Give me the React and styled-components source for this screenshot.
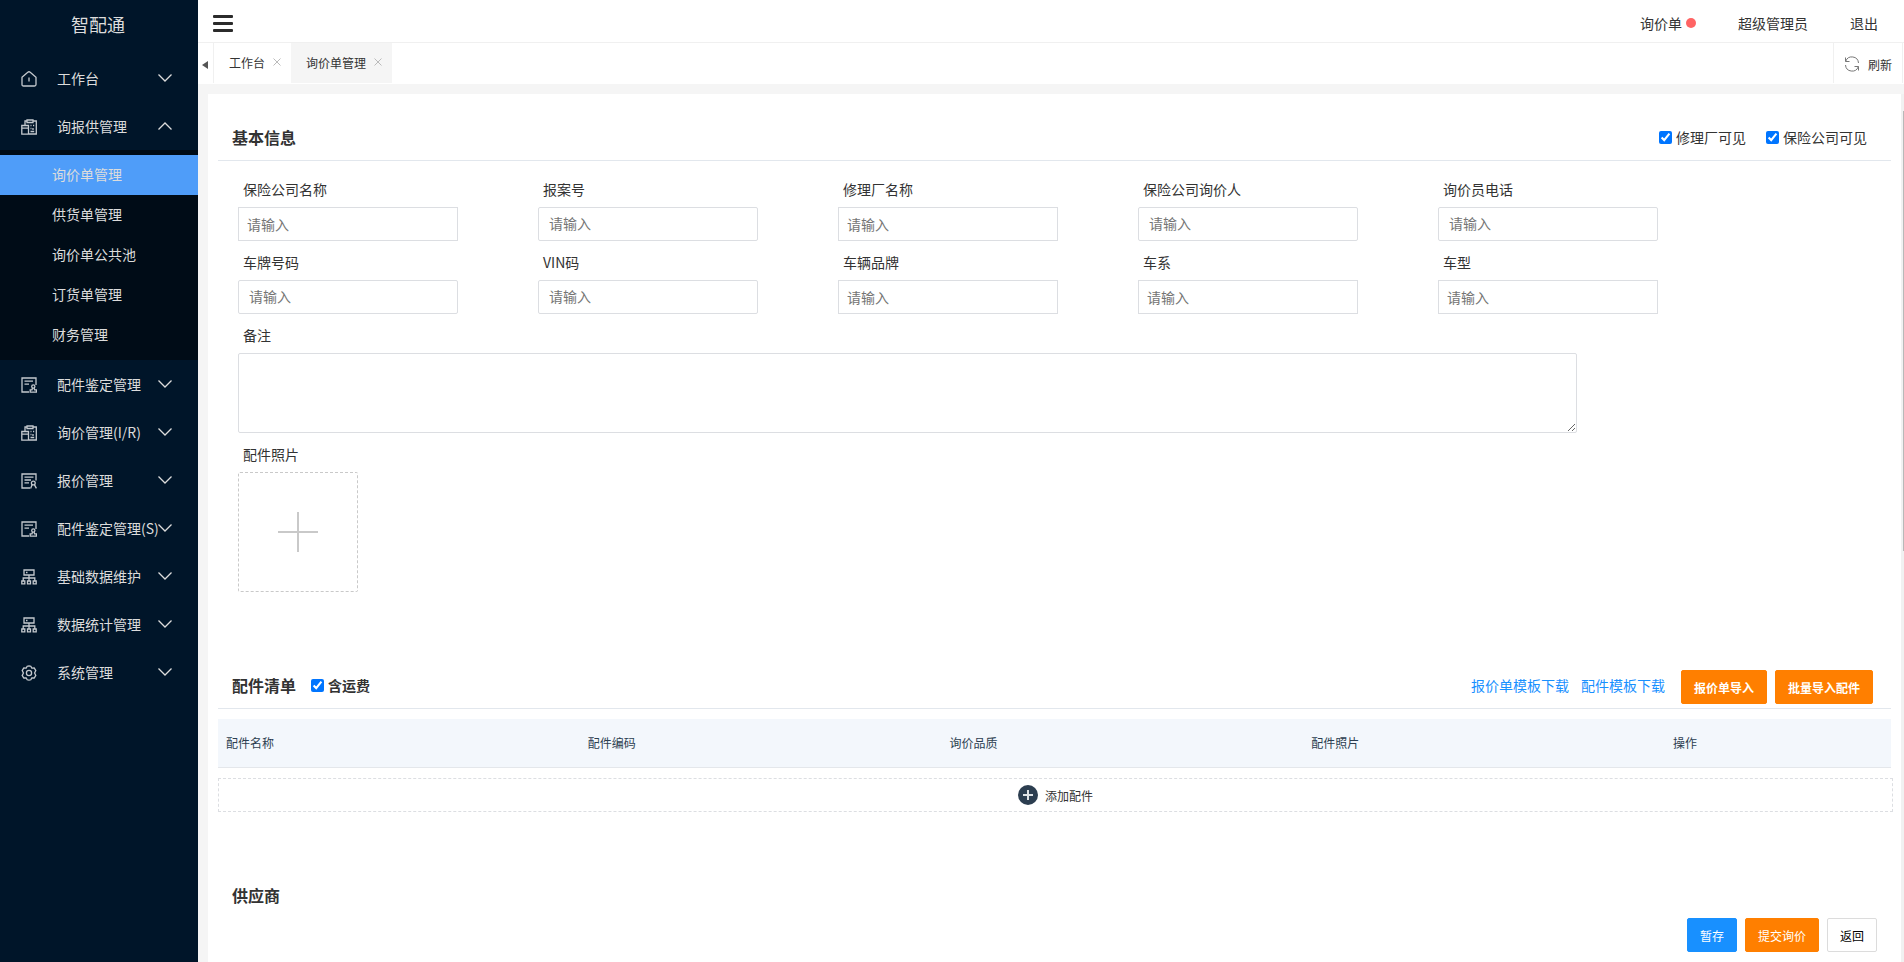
import React, { useState } from "react";
import styled, { createGlobalStyle } from "styled-components";

const menus = [
	{ name: "工作台", icon: "home" },
	{
		name: "询报供管理",
		icon: "clipboard",
		children: ["询价单管理", "供货单管理", "询价单公共池", "订货单管理", "财务管理"],
	},
	{ name: "配件鉴定管理", icon: "stamp" },
	{ name: "询价管理(I/R)", icon: "clipboard" },
	{ name: "报价管理", icon: "quote" },
	{ name: "配件鉴定管理(S)", icon: "stamp" },
	{ name: "基础数据维护", icon: "tree" },
	{ name: "数据统计管理", icon: "tree" },
	{ name: "系统管理", icon: "gear" },
];

const fields = [
	{ id: "insurer", label: "保险公司名称", select: true },
	{ id: "caseNo", label: "报案号" },
	{ id: "garage", label: "修理厂名称", select: true },
	{ id: "inquirer", label: "保险公司询价人" },
	{ id: "phone", label: "询价员电话" },
	{ id: "plate", label: "车牌号码" },
	{ id: "vin", label: "VIN码" },
	{ id: "brand", label: "车辆品牌", select: true },
	{ id: "series", label: "车系", select: true },
	{ id: "model", label: "车型", select: true },
];

const columns = ["配件名称", "配件编码", "询价品质", "配件照片", "操作"];

const icons = {
	home: (
		<>
			<path d="M1 6.2 L6.8 1.2 Q8 .3 9.2 1.2 L15 6.2 V13.5 Q15 15 13.5 15 H2.5 Q1 15 1 13.5 Z" />
			<path d="M8 6.5 V10.5" />
		</>
	),
	clipboard: (
		<>
			<path d="M4 5 V2 H6 M12 2 H15.3 V15 H8" />
			<path d="M6 1 H12 V3.5 H6 Z" />
			<path d="M.8 6.5 H7.5 V15.2 H.8 Z M.8 9.2 H7.5 M4 5 V6.5" />
			<path d="M9.5 6.5 H10.5 M12 6.5 H13.2 M9.5 9.5 H10.5 M12 9 V11 M9.5 12.5 H13.2" />
		</>
	),
	stamp: (
		<>
			<path d="M15 8 V1 H1 V15 H8" />
			<path d="M3.5 4.2 H12 M3.5 7.2 H8" />
			<circle cx="12.3" cy="9.5" r="1.6" />
			<path d="M11.5 11 L11 12.8 H9.2 V15.2 H15.4 V12.8 H13.6 L13 11" />
		</>
	),
	quote: (
		<>
			<path d="M15 7.5 V1 H1 V15 H9" />
			<path d="M3.5 4.2 H12.5 M3.5 7 H10 M3.5 9.8 H8" />
			<circle cx="12.3" cy="10" r="1.9" />
			<path d="M11.2 11.6 L9.6 15.4 M13.4 11.6 L15.4 15.4" />
		</>
	),
	tree: (
		<>
			<path d="M3 1 H13 V6 H3 Z M5 3.5 H6.5" />
			<path d="M8 6 V12 M2.2 12 V9 H13.8 V12" />
			<path d="M.8 12 H3.8 V14.8 H.8 Z M6.5 12 H9.5 V14.8 H6.5 Z M12.2 12 H15.2 V14.8 H12.2 Z" />
		</>
	),
	gear: (
		<>
			<path d="M8 .8 L9.8 1.2 L10.8 3.1 L13.2 3 L14.8 5.6 L13.6 8 L14.8 10.4 L13.2 13 L10.8 12.9 L9.8 14.8 L8 15.2 L6.2 14.8 L5.2 12.9 L2.8 13 L1.2 10.4 L2.4 8 L1.2 5.6 L2.8 3 L5.2 3.1 L6.2 1.2 Z" />
			<circle cx="8" cy="8" r="2.6" />
		</>
	),
};

const Chevron = ({ up }) => (
	<ChevronSvg viewBox="0 0 14 8" aria-hidden="true">
		<path d={up ? "M.5 7.5 L7 1 L13.5 7.5" : "M.5 .5 L7 7 L13.5 .5"} />
	</ChevronSvg>
);

const Cross = () => (
	<CrossSvg viewBox="0 0 8 8" aria-hidden="true">
		<path d="M.5 .5 L7.5 7.5 M7.5 .5 L.5 7.5" />
	</CrossSvg>
);

const Check = ({ id, label, strong }) => (
	<CheckLabel htmlFor={id} $strong={strong}>
		<input type="checkbox" id={id} defaultChecked />
		{label}
	</CheckLabel>
);

const Sidebar = ({ open, active, onToggle, onSelect }) => (
	<StyledSidebar>
		<Logo>智配通</Logo>
		{menus.map(menu => (
			<React.Fragment key={menu.name}>
				<MenuItem type="button" onClick={() => onToggle(menu.name)}>
					<MenuIcon viewBox="0 0 16 16" aria-hidden="true">
						{icons[menu.icon]}
					</MenuIcon>
					<span>{menu.name}</span>
					<Chevron up={open === menu.name} />
				</MenuItem>
				{menu.children && open === menu.name && (
					<SubMenu>
						{menu.children.map(child => (
							<SubItem href="#" key={child} $active={active === child} onClick={() => onSelect(child)}>
								{child}
							</SubItem>
						))}
					</SubMenu>
				)}
			</React.Fragment>
		))}
	</StyledSidebar>
);

const App = () => {
	const [open, setOpen] = useState("询报供管理");
	const [active, setActive] = useState("询价单管理");

	return (
		<Shell>
			<GlobalStyle />
			<Sidebar
				open={open}
				active={active}
				onToggle={name => setOpen(open === name ? "" : name)}
				onSelect={setActive}
			/>
			<Main>
				<Header>
					<Hamburger type="button" aria-label="menu">
						<i />
						<i />
						<i />
					</Hamburger>
					<UserNav>
						<a href="#">
							询价单
							<Dot />
						</a>
						<a href="#">超级管理员</a>
						<a href="#">退出</a>
					</UserNav>
				</Header>

				<TabBar>
					<TabArrow type="button" aria-label="prev">
						<svg width="6" height="8" viewBox="0 0 6 8">
							<path d="M6 0 V8 L0 4 Z" fill="#555" />
						</svg>
					</TabArrow>
					<Tab type="button">
						工作台
						<Cross />
					</Tab>
					<Tab type="button" $active>
						询价单管理
						<Cross />
					</Tab>
					<Refresh type="button">
						<svg width="16" height="16" viewBox="0 0 16 16" fill="none" stroke="#777">
							<path d="M1.5 1.5 V5.5 H5.5 M1.7 5.3 A6.6 6.6 0 0 1 14.5 7" />
							<path d="M14.5 14.5 V10.5 H10.5 M14.3 10.7 A6.6 6.6 0 0 1 1.5 9" />
						</svg>
						刷新
					</Refresh>
				</TabBar>

				<Content>
					<Panel>
						<Section>
							<SectionHead $line>
								<h2>基本信息</h2>
								<HeadChecks>
									<Check id="garageVisible" label="修理厂可见" />
									<Check id="insurerVisible" label="保险公司可见" />
								</HeadChecks>
							</SectionHead>
							<Form>
								<FieldGrid>
									{fields.map(field => (
										<Field key={field.id}>
											<label htmlFor={field.id}>{field.label}</label>
											<Input type="text" id={field.id} placeholder="请输入" $select={field.select} />
										</Field>
									))}
								</FieldGrid>
								<Field>
									<label htmlFor="remark">备注</label>
									<TextArea id="remark" />
								</Field>
								<Field>
									<label htmlFor="photo">配件照片</label>
									<Upload type="button" id="photo">
										<svg width="40" height="40" viewBox="0 0 40 40" stroke="#c9c9c9" strokeWidth="2">
											<path d="M20 0 V40 M0 20 H40" />
										</svg>
									</Upload>
								</Field>
							</Form>
						</Section>

						<Section>
							<SectionHead $line>
								<h2>配件清单</h2>
								<Check id="freight" label="含运费" strong />
								<HeadTools>
									<a href="#">报价单模板下载</a>
									<a href="#">配件模板下载</a>
									<ButtonGroup>
										<Button type="button" $color="#ff7f00" $bold>
											报价单导入
										</Button>
										<Button type="button" $color="#ff7f00" $bold>
											批量导入配件
										</Button>
									</ButtonGroup>
								</HeadTools>
							</SectionHead>
							<Table>
								<thead>
									<tr>
										{columns.map(col => (
											<th key={col}>{col}</th>
										))}
									</tr>
								</thead>
							</Table>
							<AddRow type="button">
								<svg width="20" height="20" viewBox="0 0 20 20">
									<circle cx="10" cy="10" r="10" fill="#2c3e50" />
									<path d="M10 5 V15 M5 10 H15" stroke="#dfe3e6" strokeWidth="2" />
								</svg>
								添加配件
							</AddRow>
						</Section>

						<SectionHead>
							<h2>供应商</h2>
						</SectionHead>
						<Actions>
							<Button type="button" $color="#1890ff">
								暂存
							</Button>
							<Button type="button" $color="#ff7f00">
								提交询价
							</Button>
							<Button type="button">返回</Button>
						</Actions>
					</Panel>
					<ScrollTrack>
						<ScrollThumb />
					</ScrollTrack>
				</Content>
			</Main>
		</Shell>
	);
};

const GlobalStyle = createGlobalStyle`
	* {
		box-sizing: border-box;
	}
	body {
		margin: 0;
		color: #333;
		font-size: 14px;
	}
	body, button, input, textarea {
		font-family: "Noto Sans CJK SC", sans-serif;
	}
	button {
		padding: 0;
		border: none;
		background: none;
		color: inherit;
		cursor: pointer;
	}
	a {
		color: inherit;
		text-decoration: none;
	}
	svg {
		flex: none;
	}
`;

const Shell = styled.div`
	display: flex;
	min-height: 100vh;
`;

const StyledSidebar = styled.nav`
	flex: none;
	width: 198px;
	background: #001529;
	color: #dcdcdc;
`;

const Logo = styled.div`
	height: 54px;
	padding: 0 2px 6px 0;
	line-height: 48px;
	text-align: center;
	font-size: 18px;
`;

const MenuItem = styled.button`
	display: flex;
	align-items: center;
	width: 100%;
	height: 48px;
	padding: 0 26px 0 21px;
	font-size: 14px;
	text-align: left;

	span {
		flex: 1;
		min-width: 0;
		margin-left: 20px;
		white-space: nowrap;
	}
`;

const MenuIcon = styled.svg`
	width: 16px;
	height: 16px;
	margin-top: 2px;
	fill: none;
	stroke: #c4c9ce;
	stroke-width: 1.3;
`;

const ChevronSvg = styled.svg`
	width: 14px;
	height: 8px;
	fill: none;
	stroke: #dcdcdc;
	stroke-width: 1.3;
`;

const SubMenu = styled.div`
	padding: 5px 0;
	background: #000c17;
`;

const SubItem = styled.a`
	display: block;
	padding: 0 0 2px 52px;
	line-height: 38px;
	background: ${props => (props.$active ? "#4f9df9" : "none")};
`;

const Main = styled.div`
	display: flex;
	flex: 1;
	flex-direction: column;
	min-width: 0;
`;

const Header = styled.header`
	display: flex;
	align-items: center;
	justify-content: space-between;
	height: 43px;
	padding: 4px 26px 0 15px;
	border-bottom: 1px solid #f0f0f0;
`;

const Hamburger = styled.button`
	display: flex;
	flex-direction: column;
	gap: 4px;
	width: 20px;

	i {
		height: 3px;
		border-radius: 1px;
		background: #2b2b2b;
	}
`;

const UserNav = styled.div`
	display: flex;
	gap: 42px;

	a {
		display: flex;
		align-items: center;
	}
`;

const Dot = styled.span`
	width: 10px;
	height: 10px;
	margin-left: 4px;
	border-radius: 50%;
	background: #ff6464;
`;

const TabBar = styled.div`
	display: flex;
	height: 41px;
	padding-bottom: 1px;
	padding-right: 1px;
`;

const TabArrow = styled.button`
	width: 16px;
	padding-right: 2px;
	border-right: 1px solid #f0f0f0;
`;

const Tab = styled.button`
	display: flex;
	align-items: center;
	gap: 8px;
	padding: 0 10px 2px 15px;
	background: ${props => (props.$active ? "#f5f5f5" : "#fff")};
	font-size: 12px;
`;

const CrossSvg = styled.svg`
	width: 8px;
	height: 8px;
	stroke: #bbb;
`;

const Refresh = styled.button`
	display: flex;
	align-items: center;
	gap: 8px;
	margin-left: auto;
	padding: 2px 10px 0;
	border: solid #f0f0f0;
	border-width: 0 1px;
	font-size: 12px;
`;

const Content = styled.main`
	display: flex;
	flex: 1;
	padding: 10px 0 0 10px;
	background: #f5f5f5;
`;

const Panel = styled.div`
	flex: 1;
	min-width: 0;
	padding: 10px;
	background: #fff;
`;

const ScrollTrack = styled.div`
	width: 3px;
	padding: 17px 0 0 2px;
	background: #f1f1f1;
`;

const ScrollThumb = styled.div`
	height: 440px;
	background: #b8b8b8;
`;

const Section = styled.section`
	padding-bottom: 50px;
`;

const SectionHead = styled.div`
	display: flex;
	align-items: center;
	padding: 10px 18px 0 14px;
	height: ${props => (props.$line ? "57px" : "56px")};
	border-bottom: ${props => (props.$line ? "1px solid #e2e7ed" : "none")};

	h2 {
		margin: 0 15px 0 0;
		font-size: 16px;
		font-weight: 700;
	}
`;

const CheckLabel = styled.label`
	display: flex;
	align-items: center;
	gap: 4px;
	font-weight: ${props => (props.$strong ? 700 : 400)};

	input {
		width: 13px;
		height: 13px;
		margin: 0;
	}
`;

const HeadChecks = styled.div`
	display: flex;
	gap: 20px;
	margin-left: auto;
	padding-right: 6px;
`;

const HeadTools = styled.div`
	display: flex;
	align-items: center;
	gap: 12px;
	margin-left: auto;

	a {
		color: #1890ff;
	}
`;

const ButtonGroup = styled.div`
	display: flex;
	gap: 8px;
	padding: 4px 0 0 4px;
`;

const Button = styled.button`
	height: 34px;
	padding: 0 12px;
	border: 1px solid ${props => props.$color || "#dcdcdc"};
	border-radius: 2px;
	background: ${props => props.$color || "#fff"};
	color: ${props => (props.$color ? "#fff" : "#000")};
	font-size: 12px;
	font-weight: ${props => (props.$bold ? 700 : 400)};
`;

const Form = styled.form`
	display: flex;
	flex-direction: column;
	gap: 10px;
	padding: 17px 0 10px 20px;
`;

const FieldGrid = styled.div`
	display: grid;
	grid-template-columns: repeat(auto-fill, 220px);
	gap: 10px 80px;
`;

const Field = styled.div`
	display: flex;
	flex-direction: column;
	align-items: flex-start;
	gap: 7px;

	label {
		padding-left: 5px;
		line-height: 22px;
	}
`;

const Input = styled.input`
	width: 100%;
	height: 34px;
	padding: ${props => (props.$select ? "0 8px" : "0 10px 2px")};
	border: 1px solid #dcdee2;
	border-radius: ${props => (props.$select ? "0" : "2px")};
	font-size: 14px;

	&::placeholder {
		color: #757575;
	}
`;

const TextArea = styled.textarea`
	width: 81%;
	height: 80px;
	border: 1px solid #dcdee2;
	border-radius: 2px;
`;

const Upload = styled.button`
	display: flex;
	align-items: center;
	justify-content: center;
	width: 120px;
	height: 120px;
	border: 1px dashed #c9c9c9;
	border-radius: 2px;
`;

const Table = styled.table`
	width: 100%;
	margin: 10px 0;
	table-layout: fixed;
	border-collapse: separate;
	border-spacing: 0;

	th {
		height: 49px;
		padding: 0 8px 2px;
		border-bottom: 1px solid #e4e7eb;
		background: #f3f7fc;
		color: #2c3e50;
		font-size: 12px;
		font-weight: 400;
		text-align: left;
	}
	th:last-child {
		width: 226px;
	}
`;

const AddRow = styled.button`
	display: flex;
	align-items: center;
	justify-content: center;
	gap: 7px;
	width: calc(100% + 2px);
	height: 34px;
	border: 1px dashed #dcdee2;
	font-size: 12px;
`;

const Actions = styled.div`
	display: flex;
	justify-content: flex-end;
	gap: 8px;
	padding-right: 14px;
`;

export default App;
